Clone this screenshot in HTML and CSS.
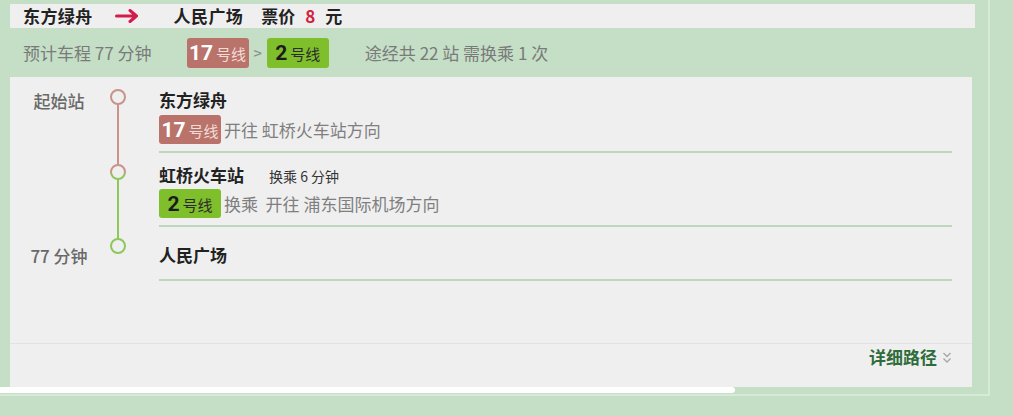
FILE: index.html
```html
<!DOCTYPE html>
<html lang="zh-CN">
<head>
<meta charset="utf-8">
<title>路线</title>
<link rel="stylesheet" href="styles.css">
</head>
<body>
<div class="frame">
  <div class="topbar">
    <span class="stn">东方绿舟</span>
    <svg class="arrow" width="24" height="14" viewBox="0 0 24 14"><path d="M1.5 7H21.5M15 1.5L21.5 7L15 12.5" fill="none" stroke="#d51a4c" stroke-width="3" stroke-linecap="round" stroke-linejoin="round"/></svg>
    <span class="stn dest">人民广场</span>
    <span class="fare-label">票价</span>
    <span class="fare">8</span>
    <span class="yuan">元</span>
  </div>
  <div class="summary">
    <span class="time">预计车程 77 分钟</span>
    <span class="badges">
      <span class="badge l17"><b>17</b><i>号线</i></span>
      <span class="gt">&gt;</span>
      <span class="badge l2"><b>2</b><i>号线</i></span>
    </span>
    <span class="info">途经共 22 站 需换乘 1 次</span>
  </div>
  <div class="panel">
    <div class="route">
      <div class="label lab1">起始站</div>
      <svg class="timeline" width="20" height="204" viewBox="0 0 20 204">
        <defs>
          <linearGradient id="mix" x1="0" y1="0" x2="0" y2="1">
            <stop offset="0" stop-color="#c9928b"/>
            <stop offset="0.45" stop-color="#c9928b"/>
            <stop offset="0.75" stop-color="#8ec85c"/>
            <stop offset="1" stop-color="#8ec85c"/>
          </linearGradient>
        </defs>
        <line x1="10" y1="27" x2="10" y2="88" stroke="#c9928b" stroke-width="2"/>
        <line x1="10" y1="102" x2="10" y2="162" stroke="#8ec85c" stroke-width="2"/>
        <circle cx="10" cy="20" r="7" fill="none" stroke="#c9928b" stroke-width="2"/>
        <circle cx="10" cy="95" r="7" fill="none" stroke="url(#mix)" stroke-width="2"/>
        <circle cx="10" cy="169" r="7" fill="none" stroke="#8ec85c" stroke-width="2"/>
      </svg>
      <div class="stop s1">
        <div class="title">东方绿舟</div>
        <div class="line-row">
          <span class="badge l17"><b>17</b><i>号线</i></span>
          <span class="dir">开往 虹桥火车站方向</span>
        </div>
      </div>
      <div class="stop s2">
        <div class="title">虹桥火车站<span class="transfer">换乘 6 分钟</span></div>
        <div class="line-row">
          <span class="badge l2"><b>2</b><i>号线</i></span>
          <span class="dir">换乘&nbsp; 开往 浦东国际机场方向</span>
        </div>
      </div>
      <div class="label lab3">77 分钟</div>
      <div class="stop s3">
        <div class="title">人民广场</div>
      </div>
    </div>
    <div class="footer">
      <span class="detail">详细路径</span>
      <svg class="chev" width="10" height="14" viewBox="0 0 10 14"><path d="M1.5 2L5 5.5L8.5 2M1.5 7.5L5 11L8.5 7.5" fill="none" stroke="#a8a8a8" stroke-width="1.4"/></svg>
    </div>
  </div>
  <div class="scrollbar"></div>
</div>
</body>
</html>
```

FILE: styles.css
```css
html, body {
  margin: 0;
  padding: 0;
}
body {
  background: #c4dfc6;
  font-family: "Noto Sans CJK SC", "Noto Sans", sans-serif;
  width: 1013px;
  height: 416px;
  overflow: hidden;
}
.frame {
  box-sizing: border-box;
  width: 990px;
  height: 396px;
  padding: 4px 0 0 10px;
  border-right: 2px solid #d6ead6;
  border-bottom: 2px solid #d6ead6;
}
.topbar {
  box-sizing: border-box;
  width: 965px;
  height: 24px;
  background: #efefef;
  display: flex;
  align-items: center;
  padding-left: 13px;
  font-size: 17px;
  font-weight: 700;
  color: #222;
  line-height: 24px;
}
.stn {
  letter-spacing: 0.4px;
}
.arrow {
  margin-left: 22px;
  margin-right: 35px;
}
.fare-label {
  margin-left: 18px;
}
.fare {
  color: #d3203f;
  margin-left: 10px;
  font-weight: 700;
}
.yuan {
  margin-left: 10px;
}
.summary {
  box-sizing: border-box;
  height: 49px;
  display: flex;
  align-items: center;
  padding-left: 13px;
  font-size: 17px;
  color: #7a7a7a;
}
.badges {
  display: flex;
  align-items: center;
  margin-left: 35px;
}
.gt {
  font-size: 15px;
  color: #888;
  margin: 0 5px;
}
.info {
  margin-left: 36px;
}
.badge {
  box-sizing: border-box;
  width: 62px;
  height: 30px;
  border-radius: 3px;
  display: inline-flex;
  align-items: baseline;
  justify-content: center;
  padding-top: 1px;
  line-height: 28px;
}
.badge b {
  font-family: Roboto, "Noto Sans CJK SC", sans-serif;
  font-size: 21px;
  font-weight: 700;
  margin-right: 3px;
}
.badge i {
  font-style: normal;
  font-size: 15px;
}
.l17 {
  background: #b9736b;
  color: #fff;
}
.l17 i {
  color: #f1dcd8;
}
.l2 {
  background: #7fbf2b;
  color: #1c1c1c;
}
.l2 i {
  color: #2c2c2c;
}
.panel {
  box-sizing: border-box;
  width: 962px;
  height: 310px;
  background: #efefef;
  display: flex;
  flex-direction: column;
}
.route {
  display: grid;
  grid-template-columns: 98px 20px 1fr;
  grid-template-rows: 76px 74px 54px;
}
.label {
  grid-column: 1;
  text-align: center;
  font-size: 17px;
  font-weight: 500;
  color: #696969;
  line-height: 22px;
}
.lab1 {
  grid-row: 1;
  padding-top: 13px;
}
.lab3 {
  grid-row: 3;
  padding-top: 18px;
}
.timeline {
  grid-column: 2;
  grid-row: 1 / 4;
  display: block;
}
.stop {
  grid-column: 3;
  box-sizing: border-box;
  margin: 0 20px 0 31px;
  border-bottom: 2px solid #bcd7bd;
}
.s1 {
  grid-row: 1;
  padding-top: 12px;
}
.s2 {
  grid-row: 2;
  padding-top: 11px;
}
.s3 {
  grid-row: 3;
  padding-top: 17px;
}
.title {
  font-size: 17px;
  font-weight: 700;
  color: #222;
  line-height: 22px;
  display: flex;
  align-items: baseline;
}
.transfer {
  font-size: 14px;
  font-weight: 400;
  color: #333;
  margin-left: 25px;
}
.line-row {
  display: flex;
  align-items: center;
  margin-top: 4px;
}
.s2 .line-row {
  margin-top: 2px;
}
.line-row .badge {
  width: 62px;
  height: 29px;
}
.dir {
  font-size: 17px;
  color: #7f7f7f;
  margin-left: 3px;
}
.footer {
  margin-top: auto;
  box-sizing: border-box;
  height: 44px;
  border-top: 1px solid #e2e2e2;
  display: flex;
  justify-content: flex-end;
  align-items: flex-start;
  padding: 2px 20px 0 0;
}
.detail {
  font-size: 17px;
  font-weight: 700;
  color: #2f6c3b;
  line-height: 22px;
}
.chev {
  margin: 5px 0 0 5px;
}
.scrollbar {
  width: 735px;
  height: 6px;
  margin-left: -10px;
  background: #ffffff;
  border-radius: 0 3px 3px 0;
}
```
